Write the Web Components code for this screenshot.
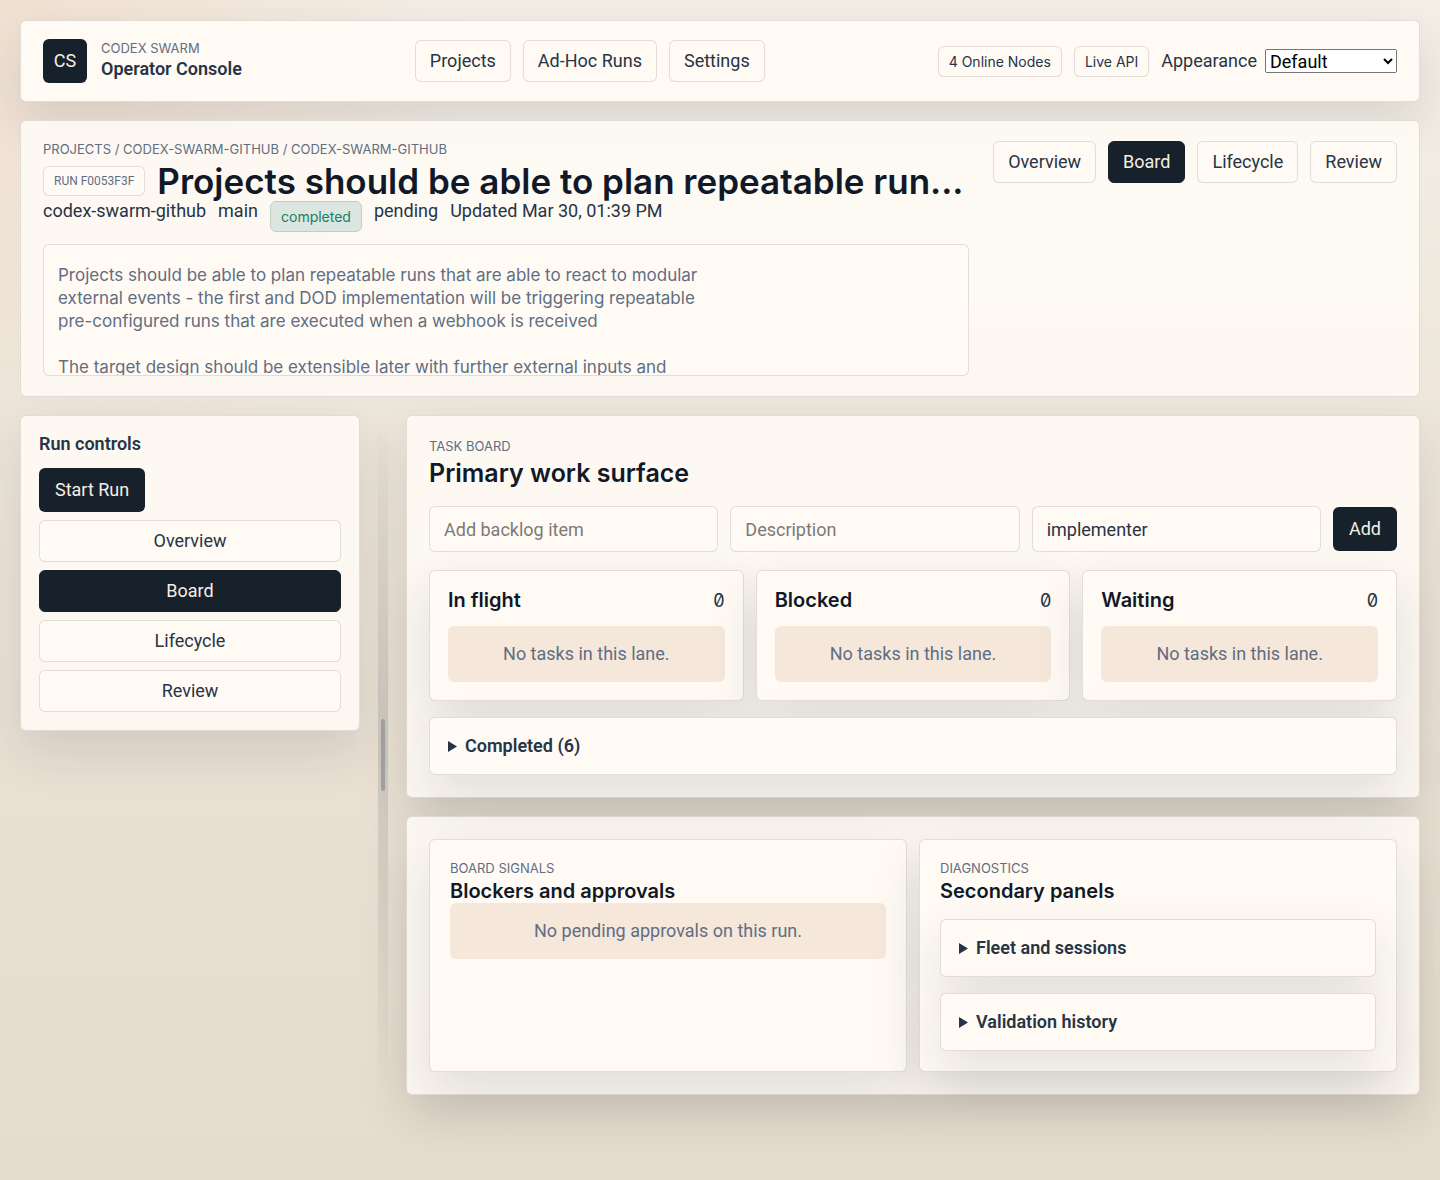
<!DOCTYPE html>
<html lang="en">
<head>
<meta charset="utf-8">
<meta name="viewport" content="width=device-width, initial-scale=1">
<title>Operator Console</title>
<style>
  :root {
    --ink: #111827;
    --text: #263445;
    --muted: #5f6e82;
    --line: rgba(24, 33, 45, 0.13);
    --panel: rgba(255, 251, 246, 0.86);
    --card: #fffaf4;
    --dark: #17212c;
    --cream: #f5efe3;
    --peach: #f6e7db;
    --radius: 6px;
    --shadow: 0 20px 50px rgba(24, 33, 45, 0.12);
    --wide: Inter, Roboto, sans-serif;
  }
  body {
    margin: 0;
    min-height: 100vh;
    color: var(--text);
    font: 18px/20px Roboto, "Liberation Sans", sans-serif;
    background:
      radial-gradient(circle at 0 0, rgba(225, 150, 110, 0.16), transparent 480px),
      linear-gradient(180deg, #f4efe6 0%, #ebe2d6 50%, #e5dccd 100%);
  }
</style>
</head>
<body>
<operator-console></operator-console>

<script>
// shared by every component: opens the shadow root and clones the markup in
function attach(host, html) {
  const template = document.createElement("template");
  template.innerHTML = "<style>*{box-sizing:border-box}:host{box-sizing:border-box}</style>" + html;
  host.attachShadow({ mode: "open" }).append(template.content.cloneNode(true));
}

class SurfacePanel extends HTMLElement {
  constructor() {
    super();
    attach(this, `
      <style>
        :host {
          display: block;
          padding: 22px;
          border: 1px solid var(--line);
          border-radius: var(--radius);
          background: var(--panel);
          box-shadow: var(--shadow);
        }
        :host([kind="bar"]) { padding: 18px 22px; background: var(--card); }
        :host([kind="hero"]) { padding: 20px 22px; box-shadow: none; }
        :host([kind="side"]) { padding: 18px; }
        :host([kind="card"]) { padding: 20px; background: var(--card); }
      </style>
      <slot></slot>`);
  }
}
customElements.define("surface-panel", SurfacePanel);

class EyebrowLabel extends HTMLElement {
  constructor() {
    super();
    attach(this, `
      <style>
        :host {
          display: block;
          color: var(--muted);
          font-family: var(--wide);
          font-size: 13px;
          line-height: 16px;
          text-transform: uppercase;
        }
      </style>
      <slot></slot>`);
  }
}
customElements.define("eyebrow-label", EyebrowLabel);

class NavPill extends HTMLElement {
  constructor() {
    super();
    attach(this, `
      <style>
        :host { display: block; }
        a {
          display: block;
          padding: 10px 14px;
          border: 1px solid var(--line);
          border-radius: var(--radius);
          background: var(--card);
          color: inherit;
          text-align: center;
          text-decoration: none;
          white-space: nowrap;
        }
        :host([active]) a {
          background: var(--dark);
          border-color: var(--dark);
          color: var(--cream);
        }
      </style>
      <a href="#"><slot></slot></a>`);
  }
}
customElements.define("nav-pill", NavPill);

class ActionButton extends HTMLElement {
  constructor() {
    super();
    attach(this, `
      <style>
        :host { display: block; }
        button {
          display: block;
          padding: 12px 16px;
          border: 0;
          border-radius: var(--radius);
          background: var(--dark);
          color: var(--cream);
          font: inherit;
          white-space: nowrap;
        }
      </style>
      <button type="button"><slot></slot></button>`);
  }
}
customElements.define("action-button", ActionButton);

class StatusPill extends HTMLElement {
  constructor() {
    super();
    attach(this, `
      <style>
        :host {
          display: block;
          flex: none;
          padding: 6px 10px;
          border: 1px solid var(--line);
          border-radius: var(--radius);
          background: var(--card);
          font-family: var(--wide);
          font-size: 14px;
          line-height: 17px;
          white-space: nowrap;
        }
        :host([tone="good"]) {
          background: #dce6e0;
          border-color: #c1cec6;
          color: #14806a;
        }
        :host([tone="id"]) {
          color: var(--muted);
          font-family: inherit;
          font-size: 12px;
          line-height: 16px;
        }
      </style>
      <slot></slot>`);
  }
}
customElements.define("status-pill", StatusPill);

class EmptyNote extends HTMLElement {
  constructor() {
    super();
    attach(this, `
      <style>
        :host {
          display: block;
          padding: 18px;
          border-radius: var(--radius);
          background: var(--peach);
          color: var(--muted);
          text-align: center;
        }
      </style>
      <slot></slot>`);
  }
}
customElements.define("empty-note", EmptyNote);

class FoldPanel extends HTMLElement {
  constructor() {
    super();
    // relative keeps the panel above the shadows of the lanes before it
    attach(this, `
      <style>
        :host {
          display: block;
          position: relative;
          padding: 18px;
          border: 1px solid var(--line);
          border-radius: var(--radius);
          background: var(--card);
          box-shadow: var(--shadow);
        }
        summary {
          display: flex;
          align-items: center;
          gap: 8px;
          font-weight: 600;
          cursor: pointer;
        }
        svg { width: 9px; height: 11px; fill: currentColor; }
        details[open] svg { transform: rotate(90deg); }
      </style>
      <details>
        <summary><svg viewBox="0 0 9 11"><path d="M0 0L9 5.5L0 11Z"/></svg><slot name="title"></slot></summary>
        <slot></slot>
      </details>`);
  }
}
customElements.define("fold-panel", FoldPanel);

class TaskLane extends HTMLElement {
  constructor() {
    super();
    attach(this, `
      <style>
        :host {
          display: block;
          padding: 18px;
          border: 1px solid var(--line);
          border-radius: var(--radius);
          background: var(--card);
          box-shadow: var(--shadow);
        }
        header {
          display: flex;
          justify-content: space-between;
          align-items: center;
          margin-bottom: 14px;
        }
        h3 { margin: 0; color: var(--ink); font: 600 20px/23px var(--wide); }
        .count { font-family: var(--wide); font-variant-numeric: slashed-zero; }
      </style>
      <header><h3><slot name="title"></slot></h3><span class="count"><slot name="count"></slot></span></header>
      <empty-note>No tasks in this lane.</empty-note>`);
  }
}
customElements.define("task-lane", TaskLane);

class BacklogForm extends HTMLElement {
  constructor() {
    super();
    attach(this, `
      <style>
        :host { display: block; }
        form {
          display: grid;
          grid-template-columns: repeat(3, minmax(0, 1fr)) auto;
          align-items: center;
          gap: 12px;
        }
        input {
          width: 100%;
          height: 46px;
          padding: 0 14px;
          border: 1px solid var(--line);
          border-radius: var(--radius);
          background: var(--card);
          color: inherit;
          font: inherit;
        }
        input::placeholder { color: #7b7a78; }
      </style>
      <form>
        <input type="text" aria-label="Add backlog item" placeholder="Add backlog item">
        <input type="text" aria-label="Description" placeholder="Description">
        <input type="text" aria-label="Role" value="implementer">
        <action-button>Add</action-button>
      </form>`);
  }
}
customElements.define("backlog-form", BacklogForm);

class ConsoleBar extends HTMLElement {
  constructor() {
    super();
    attach(this, `
      <style>
        :host { display: block; }
        .row, .brand, nav, .tools { display: flex; align-items: center; }
        .row { justify-content: space-between; flex-wrap: wrap; gap: 12px; }
        .brand { gap: 14px; }
        nav, .tools { gap: 12px; }
        .mark {
          display: grid;
          place-items: center;
          width: 44px;
          height: 44px;
          border-radius: var(--radius);
          background: var(--dark);
          color: var(--cream);
          font-size: 18px;
        }
        strong { display: block; font-weight: 600; line-height: 26px; }
        label { margin-right: -4px; }
        select { width: 132px; height: 24px; padding: 0; font: inherit; line-height: 20px; }
      </style>
      <surface-panel kind="bar">
        <div class="row">
          <div class="brand">
            <span class="mark">CS</span>
            <div>
              <eyebrow-label>Codex Swarm</eyebrow-label>
              <strong>Operator Console</strong>
            </div>
          </div>
          <nav>
            <nav-pill>Projects</nav-pill>
            <nav-pill>Ad-Hoc Runs</nav-pill>
            <nav-pill>Settings</nav-pill>
          </nav>
          <div class="tools">
            <status-pill>4 Online Nodes</status-pill>
            <status-pill>Live API</status-pill>
            <label for="appearance">Appearance</label>
            <select id="appearance"><option>Default</option></select>
          </div>
        </div>
      </surface-panel>`);
  }
}
customElements.define("console-bar", ConsoleBar);

class RunHero extends HTMLElement {
  constructor() {
    super();
    attach(this, `
      <style>
        :host { display: block; }
        .cols { display: flex; align-items: flex-start; gap: 24px; }
        .main { flex: 1; min-width: 0; }
        .title { display: flex; align-items: center; gap: 12px; margin-top: 4px; }
        h1 {
          margin: 0;
          min-width: 0;
          overflow: hidden;
          color: var(--ink);
          font: 600 35px/40px var(--wide);
          white-space: nowrap;
        }
        .meta { display: flex; gap: 12px; }
        .prompt {
          height: 132px;
          margin-top: 12px;
          padding: 19px 14px 0;
          overflow: hidden;
          border: 1px solid var(--line);
          border-radius: var(--radius);
          background: var(--card);
          color: var(--muted);
          font-family: var(--wide);
          font-size: 17px;
          line-height: 23px;
          white-space: pre-line;
        }
        nav { display: flex; gap: 12px; }
      </style>
      <surface-panel kind="hero">
        <div class="cols">
          <div class="main">
            <eyebrow-label>Projects / codex-swarm-github / codex-swarm-github</eyebrow-label>
            <div class="title">
              <status-pill tone="id">RUN F0053F3F</status-pill>
              <h1>Projects should be able to plan repeatable run...</h1>
            </div>
            <div class="meta">
              <span>codex-swarm-github</span>
              <span>main</span>
              <status-pill tone="good">completed</status-pill>
              <span>pending</span>
              <span>Updated Mar 30, 01:39 PM</span>
            </div>
            <div class="prompt">Projects should be able to plan repeatable runs that are able to react to modular
external events - the first and DOD implementation will be triggering repeatable
pre-configured runs that are executed when a webhook is received

The target design should be extensible later with further external inputs and</div>
          </div>
          <nav>
            <nav-pill>Overview</nav-pill>
            <nav-pill active>Board</nav-pill>
            <nav-pill>Lifecycle</nav-pill>
            <nav-pill>Review</nav-pill>
          </nav>
        </div>
      </surface-panel>`);
  }
}
customElements.define("run-hero", RunHero);

class RunControls extends HTMLElement {
  constructor() {
    super();
    attach(this, `
      <style>
        :host { display: block; }
        strong { display: block; margin-bottom: 14px; font-weight: 600; }
        nav { display: grid; gap: 8px; margin-top: 8px; }
      </style>
      <surface-panel kind="side">
        <strong>Run controls</strong>
        <action-button>Start Run</action-button>
        <nav>
          <nav-pill>Overview</nav-pill>
          <nav-pill active>Board</nav-pill>
          <nav-pill>Lifecycle</nav-pill>
          <nav-pill>Review</nav-pill>
        </nav>
      </surface-panel>`);
  }
}
customElements.define("run-controls", RunControls);

class SplitHandle extends HTMLElement {
  constructor() {
    super();
    attach(this, `
      <style>
        :host {
          display: grid;
          place-items: center;
          background: linear-gradient(180deg, transparent, rgba(24, 33, 45, 0.13) 50%, transparent);
          cursor: col-resize;
        }
        span { width: 4px; height: 72px; border-radius: 2px; background: #a2a3a2; }
      </style>
      <span></span>`);
  }
}
customElements.define("split-handle", SplitHandle);

class TaskBoard extends HTMLElement {
  constructor() {
    super();
    attach(this, `
      <style>
        :host { display: block; }
        h2 { margin: 4px 0 18px; color: var(--ink); font: 600 25px/30px var(--wide); }
        .lanes {
          display: grid;
          grid-template-columns: repeat(3, minmax(0, 1fr));
          gap: 12px;
          margin: 18px 0 16px;
        }
      </style>
      <surface-panel>
        <eyebrow-label>Task board</eyebrow-label>
        <h2>Primary work surface</h2>
        <backlog-form></backlog-form>
        <div class="lanes">
          <task-lane><span slot="title">In flight</span><span slot="count">0</span></task-lane>
          <task-lane><span slot="title">Blocked</span><span slot="count">0</span></task-lane>
          <task-lane><span slot="title">Waiting</span><span slot="count">0</span></task-lane>
        </div>
        <fold-panel><span slot="title">Completed (6)</span></fold-panel>
      </surface-panel>`);
  }
}
customElements.define("task-board", TaskBoard);

class BoardSignals extends HTMLElement {
  constructor() {
    super();
    attach(this, `
      <style>
        :host { display: block; }
        .cards {
          display: grid;
          grid-template-columns: repeat(2, minmax(0, 1fr));
          gap: 12px;
        }
        h3 { margin: 4px 0 0; color: var(--ink); font: 600 20px/23px var(--wide); }
        .folds { display: grid; gap: 16px; margin-top: 16px; }
      </style>
      <surface-panel>
        <div class="cards">
          <surface-panel kind="card">
            <eyebrow-label>Board signals</eyebrow-label>
            <h3>Blockers and approvals</h3>
            <empty-note>No pending approvals on this run.</empty-note>
          </surface-panel>
          <surface-panel kind="card">
            <eyebrow-label>Diagnostics</eyebrow-label>
            <h3>Secondary panels</h3>
            <div class="folds">
              <fold-panel><span slot="title">Fleet and sessions</span></fold-panel>
              <fold-panel><span slot="title">Validation history</span></fold-panel>
            </div>
          </surface-panel>
        </div>
      </surface-panel>`);
  }
}
customElements.define("board-signals", BoardSignals);

class OperatorConsole extends HTMLElement {
  constructor() {
    super();
    attach(this, `
      <style>
        :host { display: grid; gap: 18px; padding: 20px; }
        .workspace {
          display: grid;
          grid-template-columns: 340px 10px minmax(0, 1fr);
          gap: 18px;
        }
        main { display: grid; gap: 18px; }
      </style>
      <console-bar></console-bar>
      <run-hero></run-hero>
      <div class="workspace">
        <run-controls></run-controls>
        <split-handle></split-handle>
        <main>
          <task-board></task-board>
          <board-signals></board-signals>
        </main>
      </div>`);
  }
}
customElements.define("operator-console", OperatorConsole);
</script>
</body>
</html>
